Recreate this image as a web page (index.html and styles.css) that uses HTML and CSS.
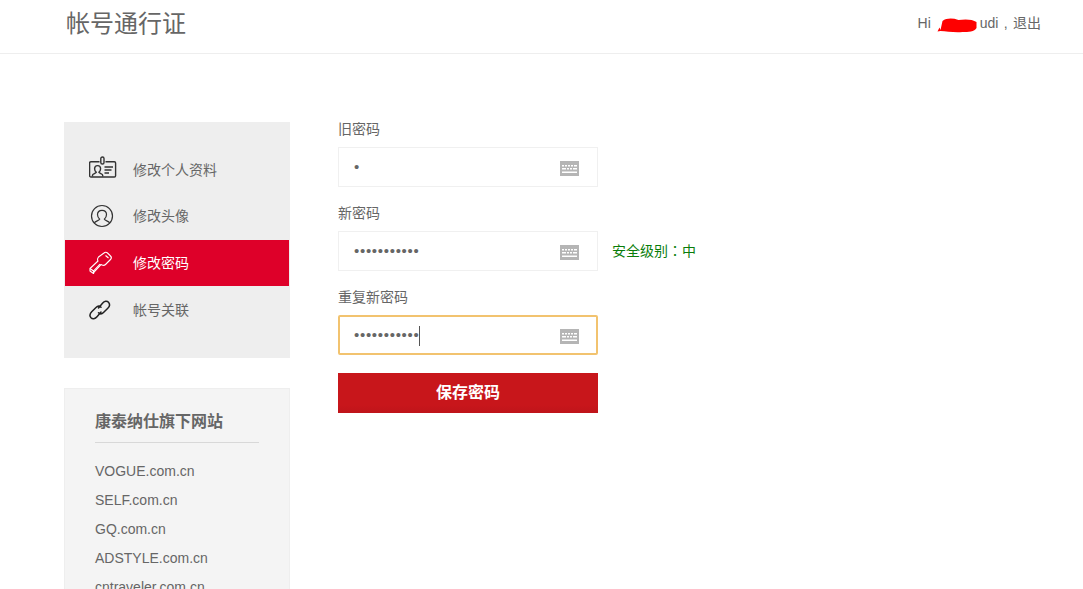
FILE: index.html
```html
<!DOCTYPE html>
<html lang="zh-CN">
<head>
<meta charset="utf-8">
<title>帐号通行证</title>
<link rel="stylesheet" href="styles.css">
</head>
<body>
<header class="topbar">
  <div class="brand">帐号通行证</div>
  <div class="user">Hi <span class="redact"><svg class="blob" width="44" height="20" viewBox="0 0 44 20"><path d="M1.500 16.500L3.500 12.500L4.500 15L6.500 6C10.500 3 16.500 3 22.500 5C28.500 4 36.500 4 40.500 7L40.500 13C38.500 17 32.500 17 26.500 17C18.500 18 10.500 16 4.500 16Z" fill="#fe0000"/></svg></span>udi , 退出</div>
</header>
<div class="page">
  <aside class="side">
    <nav class="menu">
      <a class="item">
        <svg class="ico" width="28" height="28" viewBox="0 0 28 28" fill="none" stroke="#333" stroke-width="1.400">
          <path d="M10.500 5.700H1.900a1.300 1.300 0 0 0-1.300 1.300v12.700a1.300 1.300 0 0 0 1.300 1.300h23.400a1.300 1.300 0 0 0 1.300-1.300V7a1.300 1.300 0 0 0-1.300-1.300H16.500"/>
          <rect x="11.800" y="1" width="3.200" height="7" rx="1.600"/>
          <path d="M3.500 20.500v-1.300c0-1.300 3.400-1.700 3.800-2.900-1.200-1-1.700-2.100-1.700-3.600 0-1.900 1.300-3.100 3-3.100s3 1.200 3 3.100c0 1.500-.5 2.600-1.700 3.600.4 1.200 3.800 1.600 3.800 2.900v1.300"/>
          <path d="M15.500 11h8.500M15.500 14h7M15.500 17h4.500"/>
        </svg>
        <span>修改个人资料</span>
      </a>
      <a class="item">
        <svg class="ico" width="28" height="24" viewBox="0 0 28 24" fill="none" stroke="#333" stroke-width="1.200">
          <circle cx="13" cy="12" r="10.500"/>
          <path transform="translate(-1 0)" d="M6.500 19.500v-.5c0-1.800 4.800-2.300 5.200-3.800-1.500-1.200-2.200-2.800-2.200-4.700 0-2.500 1.900-4.200 4.500-4.200s4.500 1.700 4.500 4.200c0 1.900-.7 3.500-2.200 4.700.4 1.500 5.200 2 5.200 3.800v.5"/>
        </svg>
        <span>修改头像</span>
      </a>
      <a class="item active">
        <svg class="ico" width="28" height="24" viewBox="0 0 28 24" fill="none" stroke="#fff" stroke-width="1.100" stroke-linejoin="round">
          <path d="M15 2C16 1 17.500 1 18.500 2L21.500 5C22.500 6 22.500 7.500 21.500 8.500L16.500 13.500C15.500 14.500 14 14.500 13 14L12 13.500L5 21L4.500 22.500L1 20L1 17.500L9 10L8.500 9C8.500 8 8.700 7 9.500 6Z"/>
          <path d="M16.500 4.500L19.500 7M1 17.500L4.500 20L4.500 22.500M4.500 20L11 13"/>
        </svg>
        <span>修改密码</span>
      </a>
      <a class="item">
        <svg class="ico" width="28" height="24" viewBox="0 0 28 24" fill="none" stroke="#222" stroke-width="1.500" stroke-linecap="round">
          <path d="M9.500 10L13.500 5.200C15.300 3 18 2.700 19.500 4.300C21 6 20.600 8.500 18.800 10.300L14.500 14.500C13 16 10.800 16 9.500 14.800"/>
          <path d="M12 14L8 18.800C6.200 21 3.500 21.300 2 19.700C.5 18 .9 15.500 2.700 13.700L7 9.500C8.500 8 10.700 8 12 9.200"/>
        </svg>
        <span>帐号关联</span>
      </a>
    </nav>
    <section class="sites">
      <h3 class="sites-title">康泰纳仕旗下网站</h3>
      <ul class="sites-list">
        <li>VOGUE.com.cn</li>
        <li>SELF.com.cn</li>
        <li>GQ.com.cn</li>
        <li>ADSTYLE.com.cn</li>
        <li>cntraveler.com.cn</li>
      </ul>
    </section>
  </aside>
  <main class="form">
    <div class="field">
      <label class="label">旧密码</label>
      <div class="row">
        <div class="box">
          <input class="pw" type="password" value="1" readonly>
          <svg class="kbd" width="19" height="15" viewBox="0 0 19 15"><rect width="19" height="15" fill="#b5b5b5"/><path d="M2 4h2v1.500H2zM5 4h2v1.500H5zM8 4h2v1.500H8zM11 4h2v1.500h-2zM14 4h3v1.500h-3zM2 7h4v1.500H2zM7 7h2v1.500H7zM10 7h2v1.500h-2zM13 7h4v1.500h-4zM2 10.500h15V12H2z" fill="#fff"/></svg>
        </div>
      </div>
    </div>
    <div class="field">
      <label class="label">新密码</label>
      <div class="row">
        <div class="box">
          <input class="pw" type="password" value="12345678901" readonly>
          <svg class="kbd" width="19" height="15" viewBox="0 0 19 15"><rect width="19" height="15" fill="#b5b5b5"/><path d="M2 4h2v1.500H2zM5 4h2v1.500H5zM8 4h2v1.500H8zM11 4h2v1.500h-2zM14 4h3v1.500h-3zM2 7h4v1.500H2zM7 7h2v1.500H7zM10 7h2v1.500h-2zM13 7h4v1.500h-4zM2 10.500h15V12H2z" fill="#fff"/></svg>
        </div>
        <span class="level">安全级别<span class="colon" lang="zh-TW">：</span>中</span>
      </div>
    </div>
    <div class="field last">
      <label class="label">重复新密码</label>
      <div class="row">
        <div class="box focus">
          <input class="pw" type="password" value="12345678901" readonly>
          <i class="caret"></i>
          <svg class="kbd" width="19" height="15" viewBox="0 0 19 15"><rect width="19" height="15" fill="#b5b5b5"/><path d="M2 4h2v1.500H2zM5 4h2v1.500H5zM8 4h2v1.500H8zM11 4h2v1.500h-2zM14 4h3v1.500h-3zM2 7h4v1.500H2zM7 7h2v1.500H7zM10 7h2v1.500h-2zM13 7h4v1.500h-4zM2 10.500h15V12H2z" fill="#fff"/></svg>
        </div>
      </div>
    </div>
    <button class="save" type="button">保存密码</button>
  </main>
</div>
</body>
</html>
```

FILE: styles.css
```css
* { box-sizing: border-box; }
html, body { margin: 0; height: 589px; overflow: hidden; background: #fff; }
body { font: 14px/20px "Liberation Sans", "Noto Sans CJK SC", sans-serif; color: #666; }

.topbar {
  height: 54px;
  border-bottom: 1px solid #eee;
  display: flex;
  justify-content: space-between;
  align-items: flex-start;
  padding: 0 42px 0 66px;
}
.brand { font-size: 24px; line-height: 48px; color: #666; }
.user { font-size: 14px; line-height: 46px; white-space: nowrap; word-spacing: 1.500px; }
.redact { position: relative; display: inline-block; width: 43.500px; height: 14px; vertical-align: -3px; }
.blob { position: absolute; left: 0; top: -2px; }

.page { display: flex; padding: 65px 0 0 64px; align-items: flex-start; }

.side { width: 226px; margin-top: 3px; flex: none; }
.menu { background: #eee; padding: 24.500px 1px 24.500px; }
.item { display: flex; align-items: center; height: 46.500px; padding-left: 24px; color: #666; }
.item:last-child { height: 47.500px; }
.item span { margin-left: 16px; }
.ico { flex: none; display: block; }
.item.active { background: #de0029; color: #fff; }

.sites {
  margin-top: 30px;
  height: 240px;
  background: #f4f4f4;
  border: 1px solid #eee;
  padding: 21px 30px 0;
}
.sites-title {
  margin: 0;
  height: 33px;
  border-bottom: 1px solid #d8d8d8;
  font-size: 16px;
  line-height: 24px;
  font-weight: 700;
  color: #666;
}
.sites-list { list-style: none; margin: 14px 0 0; padding: 0; }
.sites-list li { height: 29px; line-height: 29px; }

.form { width: 400px; margin-left: 48px; }
.field { margin-bottom: 16px; }
.field.last { margin-bottom: 18px; }
.label { display: block; height: 20px; margin-bottom: 8px; }
.row { display: flex; align-items: center; }
.box {
  position: relative;
  width: 260px;
  height: 40px;
  flex: none;
  border: 1px solid #f0f0f0;
  display: flex;
  align-items: center;
  padding: 0 18px 0 15px;
  background: #fff;
}
.box.focus { border: 2px solid #f2c36f; border-radius: 2px; padding: 0 17px 0 14px; }
.pw {
  flex: 1;
  min-width: 0;
  border: 0;
  outline: 0;
  padding: 0;
  background: transparent;
  color: #666;
  font: 15px/20px "Liberation Sans", sans-serif;
  letter-spacing: .7px;
}
.caret { position: absolute; left: 79px; top: 9px; width: 1px; height: 20px; background: #555; }
.kbd { flex: none; display: block; margin-top: 2px; }
.level { margin-left: 14px; color: #0a7d0a; height: 20px; }
.colon { font-family: "Noto Sans CJK TC", sans-serif; line-height: 0; }

.save {
  display: block;
  width: 260px;
  height: 40px;
  border: 0;
  padding: 0;
  background: linear-gradient(#c8161b 80%, #bf141a);
  color: #fff;
  font: 700 16px/40px "Liberation Sans", "Noto Sans CJK SC", sans-serif;
}
```
